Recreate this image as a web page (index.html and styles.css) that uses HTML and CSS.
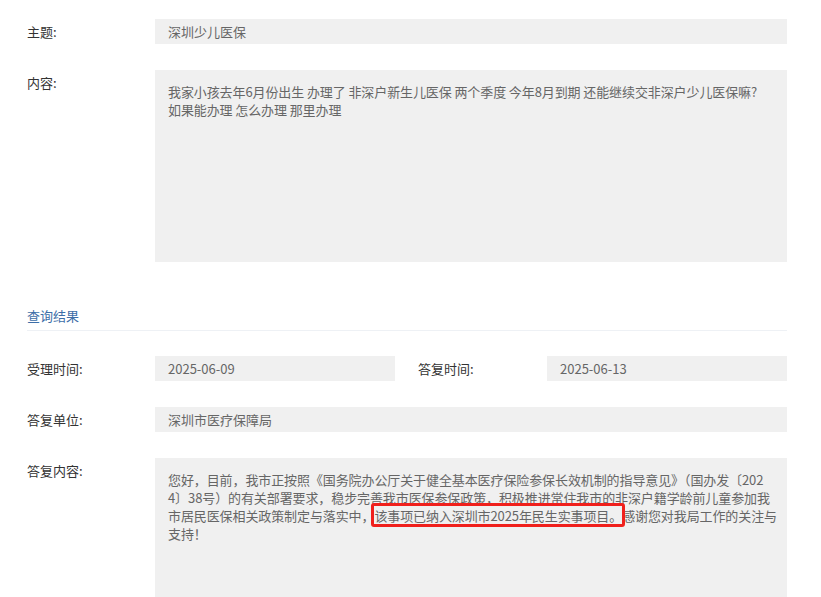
FILE: index.html
```html
<!DOCTYPE html>
<html lang="zh-CN">
<head>
    <meta charset="UTF-8">
    <meta name="viewport" content="width=device-width, initial-scale=1.0">
    <title>咨询详情</title>
    <link rel="stylesheet" href="styles.css">
</head>
<body>
    <div class="detail">
        <div class="row">
            <div class="label">主题:</div>
            <div class="field">深圳少儿医保</div>
        </div>
        <div class="row">
            <div class="label">内容:</div>
            <div class="field area">我家小孩去年6月份出生 办理了 非深户新生儿医保 两个季度 今年8月到期 还能继续交非深户少儿医保嘛?<br>如果能办理 怎么办理 那里办理</div>
        </div>

        <div class="section-title">查询结果</div>

        <div class="row">
            <div class="label">受理时间:</div>
            <div class="field short">2025-06-09</div>
            <div class="label second">答复时间:</div>
            <div class="field short">2025-06-13</div>
        </div>
        <div class="row">
            <div class="label">答复单位:</div>
            <div class="field">深圳市医疗保障局</div>
        </div>
        <div class="row">
            <div class="label">答复内容:</div>
            <div class="field area">您好，目前，我市正按照《国务院办公厅关于健全基本医疗保险参保长效机制的指导意见》（国办发〔202<br>4〕38号）的有关部署要求，稳步完善我市医保参保政策，积极推进常住我市的非深户籍学龄前儿童参加我<br>市居民医保相关政策制定与落实中，<span class="mark">该事项已纳入深圳市2025年民生实事项目。</span>感谢您对我局工作的关注与<br>支持！</div>
        </div>
    </div>
</body>
</html>
```

FILE: styles.css
```css
*{
    margin: 0;
    padding: 0;
    box-sizing: border-box;
}
body{
    background-color: #fff;
    font-family: "Noto Sans CJK SC", "Microsoft YaHei", sans-serif;
    font-size: 13px;
    color: #333;
}
.detail{
    padding: 19px 34px 0 27px;
}
.row{
    display: flex;
    align-items: flex-start;
    margin-bottom: 26px;
}
.label{
    width: 128px;
    flex-shrink: 0;
    line-height: 25px;
    color: #333;
}
.label.second{
    width: 152px;
    padding-left: 23px;
}
.field{
    flex: 1;
    background-color: #f0f0f0;
    color: #666;
    line-height: 25px;
    padding: 0 13px;
}
.field.short{
    flex: none;
    width: 240px;
}
.field.area{
    height: 192px;
    line-height: 18px;
    padding: 13px 4px 13px 13px;
    letter-spacing: -0.1px;
    white-space: nowrap;
}
.section-title{
    margin: 41px 0 25px;
    line-height: 25px;
    padding-bottom: 2px;
    color: #3d6ea8;
    border-bottom: 1px solid #eef1f5;
}
.mark{
    position: relative;
}
.mark::after{
    content: "";
    position: absolute;
    left: -3px;
    right: -3px;
    top: -3px;
    bottom: -2px;
    border: 3px solid #f0201c;
    border-radius: 3px;
}
```
